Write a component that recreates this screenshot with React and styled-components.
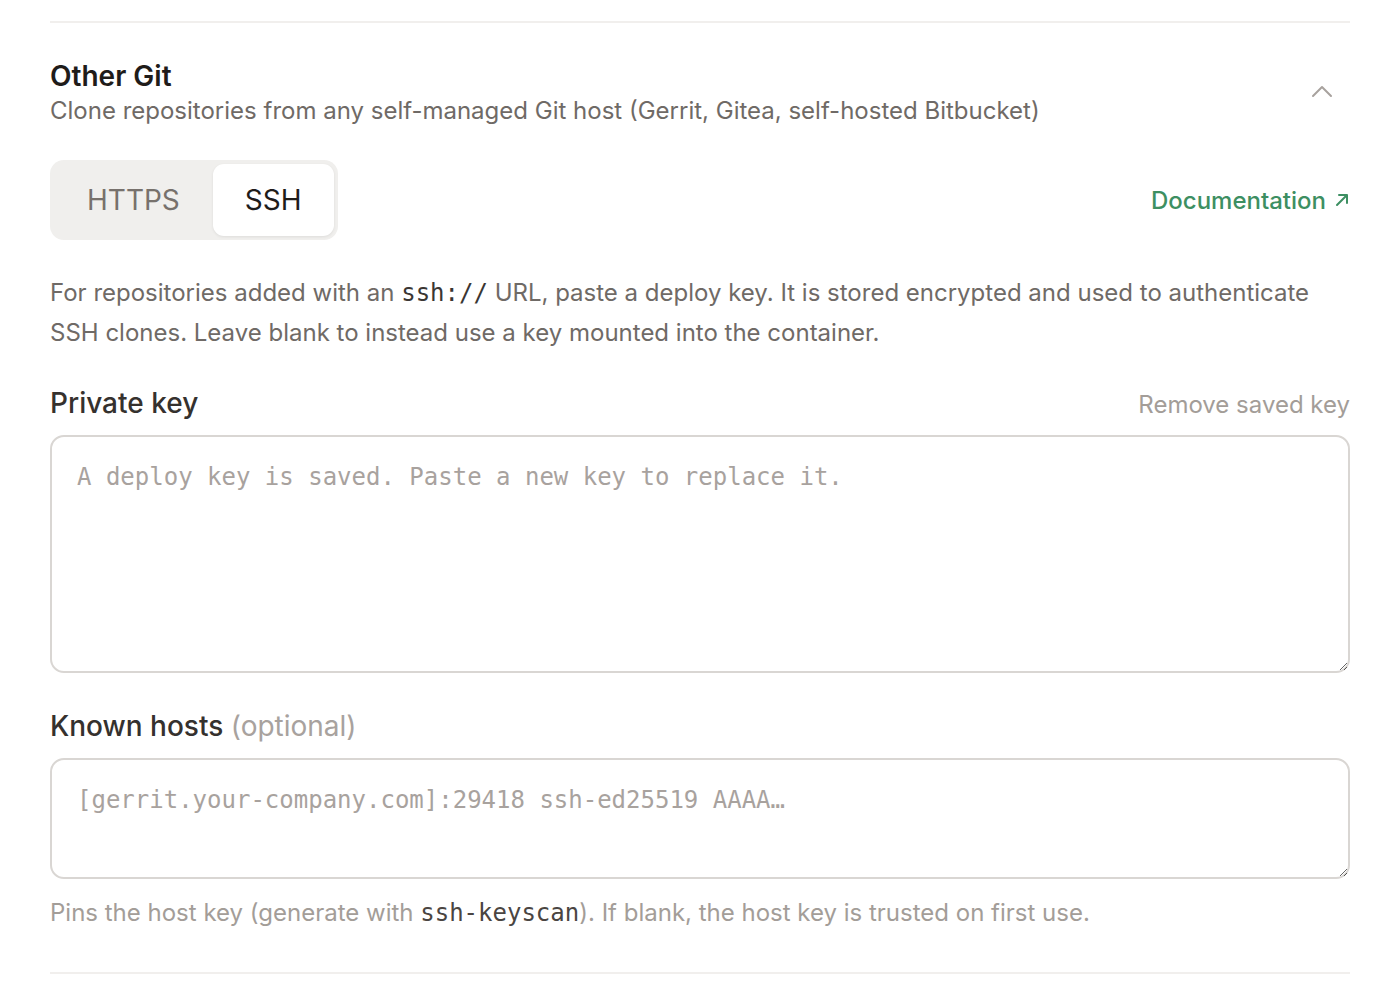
import React, { useState } from 'react';
import styled, { createGlobalStyle } from 'styled-components';

const GlobalStyle = createGlobalStyle`
  body {
    margin: 0;
    background: #ffffff;
    font-family: Inter, "Liberation Sans", sans-serif;
  }
`;

const Page = styled.div`
  padding: 0 48px 0 50px;
`;

const Section = styled.section`
  border-top: 2px solid #f1efed;
  border-bottom: 2px solid #f1efed;
  margin-top: 21px;
  padding: 35px 0 43px;
`;

const Header = styled.div`
  display: flex;
  align-items: center;
  justify-content: space-between;
`;

const Title = styled.h2`
  margin: 0;
  font-size: 28px;
  font-weight: 600;
  color: #1f1c1a;
  line-height: 36px;
`;

const Subtitle = styled.p`
  margin: 0;
  font-size: 24px;
  color: #6f6a66;
  line-height: 34px;
`;

const Chevron = styled.button`
  border: none;
  background: none;
  padding: 0;
  margin-right: 16px;
  margin-top: -4px;
  color: #a8a29e;
  display: flex;
  cursor: pointer;
`;

const Toolbar = styled.div`
  display: flex;
  align-items: center;
  justify-content: space-between;
  margin-top: 32px;
`;

const Segmented = styled.div`
  display: flex;
  background: #f0efed;
  border-radius: 14px;
  padding: 4px;
`;

const Segment = styled.button`
  border: none;
  border-radius: 11px;
  height: 72px;
  padding: 0 ${(p) => (p.$active ? '32px' : '33px')};
  font-family: Inter, "Liberation Sans", sans-serif;
  font-size: 28px;
  font-weight: 400;
  background: ${(p) => (p.$active ? '#ffffff' : 'transparent')};
  color: ${(p) => (p.$active ? '#1f1c1a' : '#77716c')};
  box-shadow: ${(p) => (p.$active ? '0 1px 3px rgba(0,0,0,0.08)' : 'none')};
  cursor: pointer;
`;

const DocLink = styled.a`
  color: #3d8f62;
  font-size: 24px;
  font-weight: 500;
  text-decoration: none;
  display: flex;
  align-items: center;
  gap: 8px;
`;

const Description = styled.p`
  margin: 33px 0 0;
  font-size: 24px;
  line-height: 40px;
  color: #6f6a66;
`;

const Code = styled.code`
  font-family: "DejaVu Sans Mono", "Liberation Mono", monospace;
  font-size: 24px;
  line-height: 1;
  color: ${(p) => p.$color || '#3a3633'};
`;

const FieldHead = styled.div`
  display: flex;
  align-items: baseline;
  justify-content: space-between;
  margin-top: ${(p) => p.$top || '32px'};
`;

const Label = styled.label`
  font-size: 28px;
  font-weight: 500;
  color: #35312e;
`;

const Optional = styled.span`
  color: #a8a29e;
  font-weight: 400;
`;

const TextButton = styled.button`
  border: none;
  background: none;
  padding: 0;
  font-family: Inter, "Liberation Sans", sans-serif;
  font-size: 24px;
  color: #a39d98;
  cursor: pointer;
`;

const TextArea = styled.textarea`
  display: block;
  box-sizing: border-box;
  width: 100%;
  height: ${(p) => p.$height}px;
  margin-top: 15px;
  padding: 24px 25px;
  border: 2px solid #d9d6d3;
  border-radius: 14px;
  font-family: "DejaVu Sans Mono", "Liberation Mono", monospace;
  font-size: 24px;
  line-height: 32px;
  color: #1f1c1a;
  background: #fff;
  resize: vertical;
  outline: none;
  &::placeholder {
    color: #a8a29e;
  }
`;

const Help = styled.p`
  margin: 18px 0 0;
  font-size: 24px;
  line-height: 32px;
  color: #a39d98;
`;

export default function App() {
  const [mode, setMode] = useState('ssh');
  return (
    <>
      <GlobalStyle />
      <Page>
        <Section>
          <Header>
            <div>
              <Title>Other Git</Title>
              <Subtitle>Clone repositories from any self-managed Git host (Gerrit, Gitea, self-hosted Bitbucket)</Subtitle>
            </div>
            <Chevron aria-label="Collapse">
              <svg width="24" height="24" viewBox="0 0 24 24" fill="none" stroke="currentColor" strokeWidth="2" strokeLinecap="round" strokeLinejoin="round">
                <path d="M3 17l9-9 9 9" />
              </svg>
            </Chevron>
          </Header>

          <Toolbar>
            <Segmented>
              <Segment $active={mode === 'https'} onClick={() => setMode('https')}>HTTPS</Segment>
              <Segment $active={mode === 'ssh'} onClick={() => setMode('ssh')}>SSH</Segment>
            </Segmented>
            <DocLink href="#">
              Documentation
              <svg width="16" height="16" viewBox="0 0 16 16" fill="none" stroke="currentColor" strokeWidth="2" strokeLinecap="round" strokeLinejoin="round">
                <path d="M3 13L13 3M5 3h8v8" />
              </svg>
            </DocLink>
          </Toolbar>

          <Description>
            For repositories added with an <Code>ssh://</Code> URL, paste a deploy key. It is stored encrypted and used to authenticate SSH clones. Leave blank to instead use a key mounted into the container.
          </Description>

          <FieldHead $top="33px">
            <Label>Private key</Label>
            <TextButton>Remove saved key</TextButton>
          </FieldHead>
          <TextArea $height={238} placeholder="A deploy key is saved. Paste a new key to replace it." />

          <FieldHead $top="36px">
            <Label>Known hosts <Optional>(optional)</Optional></Label>
          </FieldHead>
          <TextArea $height={121} placeholder="[gerrit.your-company.com]:29418 ssh-ed25519 AAAA…" />
          <Help>
            Pins the host key (generate with <Code $color="#4a4542">ssh-keyscan</Code>). If blank, the host key is trusted on first use.
          </Help>
        </Section>
      </Page>
    </>
  );
}
